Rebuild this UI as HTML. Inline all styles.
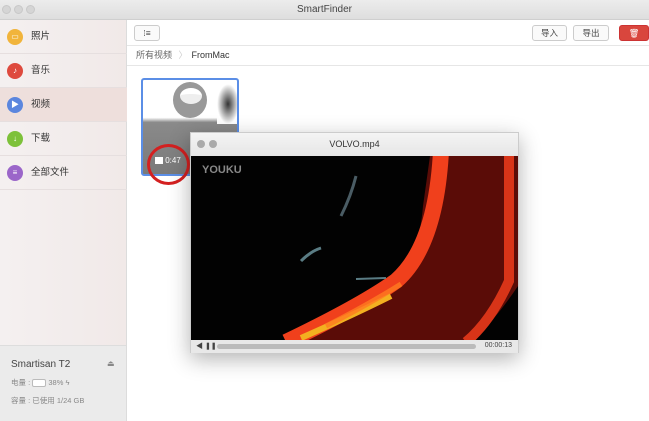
<!DOCTYPE html>
<html><head><meta charset="utf-8"><style>
*{margin:0;padding:0;box-sizing:border-box}
body{width:649px;height:421px;overflow:hidden;font-family:"Liberation Sans","Noto Sans CJK SC",sans-serif;background:#fff;position:relative}
.tb{position:absolute;left:0;top:0;width:649px;height:20px;background:linear-gradient(#ececec,#dedede);border-bottom:1px solid #cfcfcf;text-align:center;font-size:10px;line-height:19px;color:#444}
.dot{position:absolute;top:5px;width:9px;height:9px;border-radius:50%;background:#d5d5d5;border:1px solid #c8c8c8}
.sb{position:absolute;left:0;top:20px;width:127px;height:401px;background:linear-gradient(90deg,#f4f0f0,#f1e9e8);border-right:1px solid #dcdcdc}
.it{position:absolute;left:0;width:127px;height:34px;border-bottom:1px solid #e6dfdf;font-size:9.5px;color:#333;line-height:34px;padding-left:31px}
.ic{position:absolute;left:7px;top:9px;width:16px;height:16px;border-radius:50%;color:#fff;font-size:8px;line-height:16px;text-align:center}
.bt{position:absolute;top:25px;height:16px;border:1px solid #ccc;border-radius:3px;background:#fafafa;font-size:8.5px;line-height:14px;text-align:center;color:#444}
</style></head><body>
<div class="tb">SmartFinder</div>
<div class="dot" style="left:2px"></div><div class="dot" style="left:14px"></div><div class="dot" style="left:26px"></div>
<div class="sb">
<div class="it" style="top:0">照片<div class="ic" style="background:#f1b43b">▭</div></div>
<div class="it" style="top:34px">音乐<div class="ic" style="background:#de4a3e">♪</div></div>
<div class="it" style="top:68px;background:#eedfdc">视频<div class="ic" style="background:#5b86de">▶</div></div>
<div class="it" style="top:102px">下载<div class="ic" style="background:#7dc13a">↓</div></div>
<div class="it" style="top:136px">全部文件<div class="ic" style="background:#9b66c9">≡</div></div>
<div style="position:absolute;top:325px;left:0;width:126px;height:76px;background:#ebebeb;border-top:1px solid #ddd"></div>
<div style="position:absolute;left:11px;top:339px;font-size:10px;color:#444">Smartisan T2</div>
<div style="position:absolute;left:107px;top:339px;font-size:8px;color:#888">⏏</div>
<div style="position:absolute;left:11px;top:357px;font-size:7.5px;color:#888">电量 : <span style="display:inline-block;width:14px;height:8px;border:1px solid #bbb;border-radius:2px;vertical-align:middle;background:#fff"></span> 38% ϟ</div>
<div style="position:absolute;left:11px;top:375px;font-size:7.5px;color:#888">容量 : 已使用 1/24 GB</div>
</div>
<div class="bt" style="left:134px;width:26px">⁞≡</div>
<div class="bt" style="left:532px;width:35px">导入</div>
<div class="bt" style="left:573px;width:36px">导出</div>
<div class="bt" style="left:619px;width:30px;background:#d9463d;border-color:#c33;color:#fff">🗑</div>
<div style="position:absolute;left:127px;top:45px;width:522px;height:21px;border-top:1px solid #e6e6e6;border-bottom:1px solid #e6e6e6;font-size:9px;line-height:19px;color:#666;padding-left:9px">所有视频 <span style="color:#ccc;margin:0 4px">〉</span><span style="color:#333">FromMac</span></div>
<div style="position:absolute;left:141px;top:78px;width:98px;height:98px;border:2px solid #5b8ee6;border-radius:3px;background:linear-gradient(#fff 0,#fff 40%,#8a8a8a 45%,#7a7a7a 100%);overflow:hidden">
<div style="position:absolute;left:30px;top:2px;width:34px;height:36px;border-radius:50%;background:#999"></div>
<div style="position:absolute;left:37px;top:8px;width:22px;height:16px;border-radius:50%;background:#eee;border-top:6px solid #fff"></div>
<div style="position:absolute;left:74px;top:4px;width:22px;height:40px;background:radial-gradient(#333,#fff 70%)"></div>
<div style="position:absolute;left:12px;top:75px;font-size:8px;color:#fff">▇ 0:47</div>
</div>
<div style="position:absolute;left:147px;top:144px;width:43px;height:41px;border:3px solid #d42020;border-radius:50%"></div>
<div style="position:absolute;left:190px;top:132px;width:329px;height:221px;background:#eee;border:1px solid #ccc;box-shadow:0 6px 20px rgba(0,0,0,.3)">
<div style="height:23px;background:linear-gradient(#f4f4f4,#e6e6e6);font-size:9px;text-align:center;line-height:22px;color:#333;position:relative">VOLVO.mp4
<span style="position:absolute;left:6px;top:7px;width:8px;height:8px;border-radius:50%;background:#aaa"></span><span style="position:absolute;left:18px;top:7px;width:8px;height:8px;border-radius:50%;background:#aaa"></span></div>
<div style="position:relative;height:184px;background:#020202;overflow:hidden">
<svg width="327" height="184" style="position:absolute;left:0;top:0">
<path d="M239,0 L327,0 L327,130 Q300,170 280,184 L99,184 Q170,150 205,125 Q228,100 232,50 Z" fill="#5a0c07"/>
<path d="M250,-5 Q245,90 205,125 Q170,150 95,186" fill="none" stroke="#f0401c" stroke-width="16"/>
<path d="M318,-5 L318,125 Q300,165 275,186" fill="none" stroke="#d83418" stroke-width="10"/>
<path d="M110,182 Q160,160 200,140" fill="none" stroke="#f3b020" stroke-width="6"/>
<path d="M135,170 Q175,150 210,128" fill="none" stroke="#ff7a20" stroke-width="5" opacity=".8"/>
<path d="M165,20 Q160,40 150,60" stroke="#4a5c64" stroke-width="3" fill="none"/>
<path d="M110,105 Q120,95 130,92" stroke="#5a7c84" stroke-width="3" fill="none"/>
<path d="M165,123 L195,122" stroke="#5a7c84" stroke-width="2" fill="none"/>
</svg>
<div style="position:absolute;left:11px;top:8px;color:#888;font-size:11px;font-weight:bold">YOUKU</div>
</div>
<div style="height:13px;background:#e8e8e8;position:relative;font-size:7px;color:#444">
<span style="position:absolute;left:5px;top:1px">◀ ❚❚</span>
<div style="position:absolute;left:26px;top:4px;width:259px;height:5px;border-radius:3px;background:#bbb"></div>
<span style="position:absolute;right:6px;top:2px">00:00:13</span></div>
</div>
</body></html>
